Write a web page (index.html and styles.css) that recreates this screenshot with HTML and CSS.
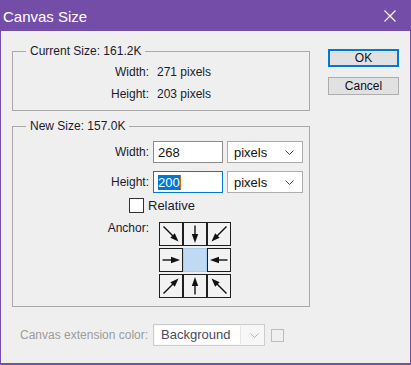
FILE: index.html
```html
<!DOCTYPE html>
<html>
   <head>
      <meta charset="utf-8">
      <title>Canvas Size</title>
      <link rel="stylesheet" href="styles.css">
   </head>
   <body>
      <div class="dialog">
         <div class="titlebar">
            <span class="title">Canvas Size</span>
            <svg class="close" width="14" height="14" viewBox="0 0 14 14">
               <path d="M1.5 1.5 L12.5 12.5 M12.5 1.5 L1.5 12.5" stroke="#fff" stroke-width="1.2" fill="none"/>
            </svg>
         </div>
         <div class="content">
            <div class="main">
               <fieldset class="group current">
                  <legend>Current Size: 161.2K</legend>
                  <div class="rows">
                     <span class="label">Width:</span><span class="value">271 pixels</span>
                     <span class="label">Height:</span><span class="value">203 pixels</span>
                  </div>
               </fieldset>

               <fieldset class="group new">
                  <legend>New Size: 157.0K</legend>
                  <div class="fields">
                     <span class="label">Width:</span>
                     <div class="textbox">268</div>
                     <div class="dropdown"><span>pixels</span><svg width="9" height="5" viewBox="0 0 9 5"><path d="M0.5 0.5 L4.5 4.5 L8.5 0.5" stroke="#444" fill="none"/></svg></div>
                     <span class="label">Height:</span>
                     <div class="textbox focused"><span class="selected">200</span><span class="caret"></span></div>
                     <div class="dropdown"><span>pixels</span><svg width="9" height="5" viewBox="0 0 9 5"><path d="M0.5 0.5 L4.5 4.5 L8.5 0.5" stroke="#444" fill="none"/></svg></div>
                  </div>
                  <div class="relative"><span class="check"></span>Relative</div>
                  <div class="anchor-row">
                     <span class="label">Anchor:</span>
                     <div class="anchor">
                        <div class="cell"><svg class="diag" viewBox="0 0 22 22"><path d="M3.5 3.5 L13 13" stroke="#111" stroke-width="1.4"/><polygon points="18.5,18.5 14.8,10.3 10.3,14.8" fill="#111"/></svg></div>
                        <div class="cell"><svg class="straight r90" viewBox="0 0 22 22"><path d="M2.5 11 L13 11" stroke="#111" stroke-width="1.4"/><polygon points="20,11 11,7.8 11,14.2" fill="#111"/></svg></div>
                        <div class="cell"><svg class="diag r90" viewBox="0 0 22 22"><path d="M3.5 3.5 L13 13" stroke="#111" stroke-width="1.4"/><polygon points="18.5,18.5 14.8,10.3 10.3,14.8" fill="#111"/></svg></div>
                        <div class="cell"><svg class="straight" viewBox="0 0 22 22"><path d="M2.5 11 L13 11" stroke="#111" stroke-width="1.4"/><polygon points="20,11 11,7.8 11,14.2" fill="#111"/></svg></div>
                        <div class="cell center"></div>
                        <div class="cell"><svg class="straight r180" viewBox="0 0 22 22"><path d="M2.5 11 L13 11" stroke="#111" stroke-width="1.4"/><polygon points="20,11 11,7.8 11,14.2" fill="#111"/></svg></div>
                        <div class="cell"><svg class="diag r270" viewBox="0 0 22 22"><path d="M3.5 3.5 L13 13" stroke="#111" stroke-width="1.4"/><polygon points="18.5,18.5 14.8,10.3 10.3,14.8" fill="#111"/></svg></div>
                        <div class="cell"><svg class="straight r270" viewBox="0 0 22 22"><path d="M2.5 11 L13 11" stroke="#111" stroke-width="1.4"/><polygon points="20,11 11,7.8 11,14.2" fill="#111"/></svg></div>
                        <div class="cell"><svg class="diag r180" viewBox="0 0 22 22"><path d="M3.5 3.5 L13 13" stroke="#111" stroke-width="1.4"/><polygon points="18.5,18.5 14.8,10.3 10.3,14.8" fill="#111"/></svg></div>
                     </div>
                  </div>
               </fieldset>

               <div class="extension">
                  <span class="ext-label">Canvas extension color:</span>
                  <div class="ext-select">
                     <span class="ext-value">Background</span>
                     <svg width="9" height="5" viewBox="0 0 9 5"><path d="M0.5 0.5 L4.5 4.5 L8.5 0.5" stroke="#b5b5b5" fill="none"/></svg>
                  </div>
                  <span class="swatch"></span>
               </div>
            </div>

            <div class="buttons">
               <button class="btn default">OK</button>
               <button class="btn">Cancel</button>
            </div>
         </div>
      </div>
   </body>
</html>
```

FILE: styles.css
```css
body {
    margin: 0;
    padding: 0;
    font-family: "Liberation Sans", Arial, sans-serif;
    font-size: 12px;
    color: #1a1a2e;
}
.dialog {
    width: 411px;
    height: 365px;
    box-sizing: border-box;
    background: #efefef;
    border: 1px solid #7450aa;
    border-top: none;
    border-bottom-width: 2px;
}
.titlebar {
    height: 31px;
    background: #744da9;
    color: #fff;
    display: flex;
    align-items: center;
    justify-content: space-between;
    padding: 0 14px 0 3px;
    margin: 0 -1px;
}
.title {
    font-size: 15px;
    padding-top: 1px;
}
.close {
    display: block;
    margin-top: 1px;
}
.content {
    display: flex;
    padding: 13px 0 0 11px;
    gap: 18px;
}
.main {
    width: 298px;
}
.group {
    margin: 0;
    padding: 0;
    border: 1px solid #a9a9a9;
    min-width: 0;
}
.group legend {
    margin-left: 13px;
    padding: 0 4px;
    line-height: 14px;
}
.current {
    padding: 3px 0 5px 0;
}
.rows {
    display: grid;
    grid-template-columns: 136px auto;
    column-gap: 8px;
    grid-auto-rows: 22px;
    align-items: center;
}
.label {
    text-align: right;
}
.new {
    margin-top: 8px;
    padding: 8px 0 8px 0;
}
.fields {
    display: grid;
    grid-template-columns: 136px 70px 76px;
    column-gap: 4px;
    row-gap: 8px;
    grid-auto-rows: 22px;
    align-items: center;
}
.textbox, .dropdown {
    height: 22px;
    box-sizing: border-box;
    background: #fff;
    border: 1px solid #8a8a8a;
    display: flex;
    align-items: center;
    font-size: 13px;
    color: #111;
}
.textbox {
    padding-left: 4px;
}
.textbox.focused {
    border-color: #0078d7;
}
.selected {
    background: #0078d7;
    color: #fff;
    line-height: 15px;
}
.caret {
    width: 1px;
    height: 15px;
    background: #c96a18;
}
.dropdown {
    justify-content: space-between;
    padding: 0 8px 0 6px;
    border-color: #adadad;
}
.relative {
    display: flex;
    align-items: center;
    height: 16px;
    margin-top: 4px;
    padding-left: 116px;
    font-size: 13px;
}
.check {
    width: 15px;
    height: 15px;
    box-sizing: border-box;
    border: 1px solid #333;
    background: #fff;
    margin-right: 4px;
}
.anchor-row {
    display: flex;
    align-items: flex-start;
    margin-top: 9px;
}
.anchor-row .label {
    width: 136px;
    line-height: 12px;
}
.anchor {
    margin-left: 10px;
    display: grid;
    grid-template-columns: repeat(3, 24px);
    grid-auto-rows: 24px;
    row-gap: 2px;
}
.cell {
    box-sizing: border-box;
    border: 1px solid #1e1e1e;
    background: #f2f2f2;
}
.cell svg {
    display: block;
    width: 22px;
    height: 22px;
}
.cell.center {
    background: #bfdaf2;
    border-color: #a9cbea;
}
.r90 { transform: rotate(90deg); }
.r180 { transform: rotate(180deg); }
.r270 { transform: rotate(270deg); }
.extension {
    display: flex;
    align-items: center;
    margin-top: 17px;
    padding-left: 8px;
}
.ext-label {
    width: 133px;
    color: #9c9c9c;
    white-space: nowrap;
}
.ext-select {
    width: 112px;
    height: 22px;
    box-sizing: border-box;
    border: 1px solid #cccccc;
    background: #f7f7f7;
    display: flex;
    align-items: center;
    padding: 1px 5px 1px 1px;
    gap: 9px;
}
.ext-value {
    flex: 1;
    height: 18px;
    background: #fff;
    border-right: 1px solid #e6e6e6;
    font-size: 13px;
    line-height: 18px;
    padding-left: 6px;
    color: #4a4a5e;
}
.swatch {
    width: 13px;
    height: 13px;
    box-sizing: border-box;
    border: 1px solid #bcbcbc;
    margin-left: 6px;
}
.buttons {
    display: flex;
    flex-direction: column;
    gap: 10px;
    padding-top: 5px;
}
.btn {
    width: 71px;
    height: 18px;
    box-sizing: border-box;
    background: #e1e1e1;
    border: 1px solid #adadad;
    font-family: "Liberation Sans", Arial, sans-serif;
    font-size: 12px;
    color: #111;
    padding: 0;
}
.btn.default {
    border: 2px solid #0078d7;
}
```
